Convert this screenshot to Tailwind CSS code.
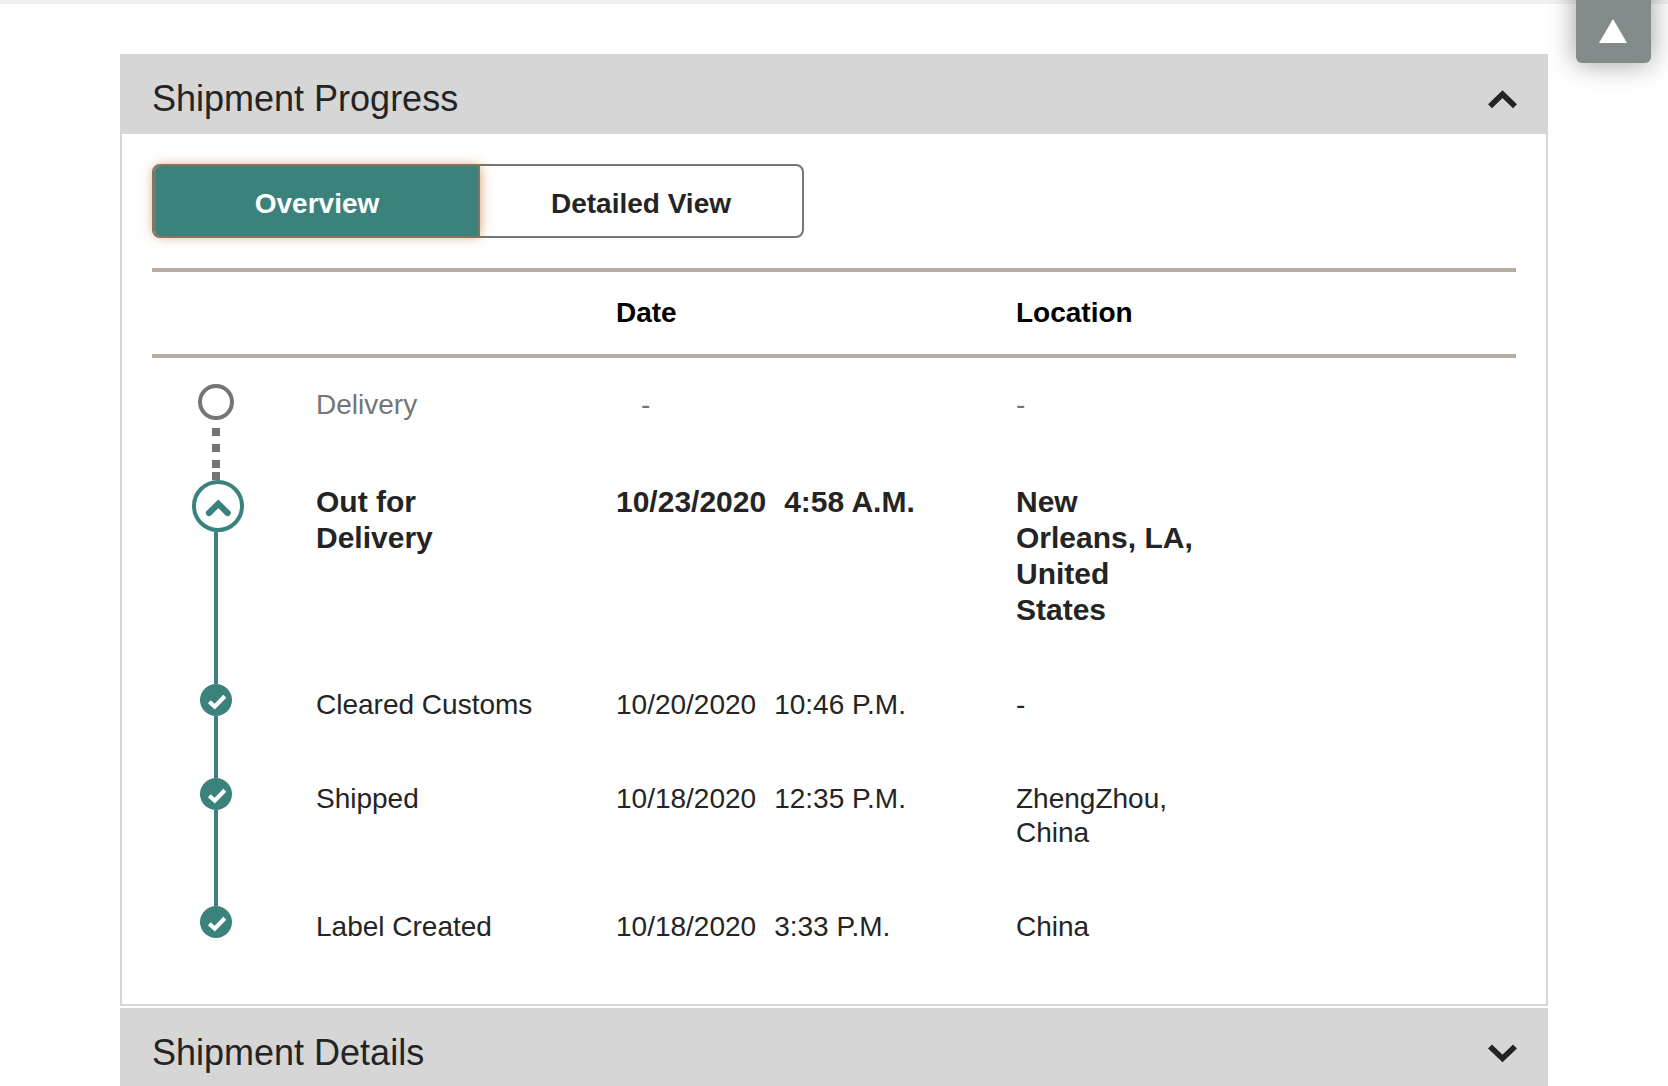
<!DOCTYPE html>
<html lang="en">

<head>
  <meta charset="UTF-8" />
  <meta name="viewport" content="width=device-width, initial-scale=1.0" />
  <title>Shipment Progress</title>
  <script src="https://cdn.jsdelivr.net/npm/@tailwindcss/browser@4"></script>
</head>

<body class="bg-white font-['Liberation_Sans',Arial,sans-serif] text-[28px] leading-[34px] text-[#242424]">

  <div class="h-1 bg-[#f0f0ee]"></div>

  <!-- Back to top -->
  <button type="button" aria-label="Back to top"
    class="fixed -top-5 right-[17px] flex h-[83px] w-[75px] items-end justify-center rounded-md bg-[#828b8a] pb-5 shadow-[0_0_28px_rgba(0,0,0,0.4)]">
    <svg class="h-6 w-[29px]" viewBox="0 0 29 24" fill="#fff">
      <path d="M14 0 28 24H0Z" />
    </svg>
  </button>

  <main class="px-[120px] pt-[50px]">

    <!-- Shipment progress -->
    <section class="border-2 border-t-0 border-[#d6d6d6]">
      <h2 class="-mx-[2px] bg-[#d6d6d6]">
        <button type="button" aria-expanded="true"
          class="flex h-20 w-full items-center justify-between pt-2.5 pr-[31px] pl-8 text-left text-4xl">
          Shipment Progress
          <svg class="h-5 w-[29px]" viewBox="0 0 29 20" fill="none" stroke="currentColor" stroke-width="5.6">
            <path d="M2 17.2 14.5 5.2 27 17.2" />
          </svg>
        </button>
      </h2>

      <div class="px-[30px] pt-[30px]">
        <div class="flex h-[74px] max-w-[652px] rounded-lg border-2 border-[#757575] font-bold">
          <button type="button" aria-pressed="true"
            class="w-[326px] rounded-l-md border-x-2 border-[#757575] bg-[#3a827b] pt-1.5 text-white shadow-[0_0_12px_rgba(190,115,35,0.7)]">Overview</button>
          <button type="button" aria-pressed="false" class="flex-1 pt-1.5">Detailed View</button>
        </div>

        <table class="mt-[30px] block w-full text-left">
          <thead class="block border-y-4 border-[#b9ada2] text-black">
            <tr class="grid grid-cols-[41fr_75fr_100fr_125fr] py-6">
              <td></td>
              <td></td>
              <th>Date</th>
              <th>Location</th>
            </tr>
          </thead>
          <tbody class="block pt-[26px] pb-1">

            <tr class="grid h-24 grid-cols-[41fr_75fr_100fr_125fr] text-[#757575]">
              <td class="flex w-32 flex-col items-center">
                <svg class="size-9" viewBox="0 0 36 36" fill="none" stroke="#757575" stroke-width="4">
                  <circle cx="18" cy="18" r="16" />
                </svg>
                <svg class="h-[60px] w-2" viewBox="0 0 8 60" fill="#757575">
                  <path d="M0 8h8v8H0zM0 24h8v8H0zM0 40h8v8H0zM0 52h8v8H0z" />
                </svg>
              </td>
              <td class="pt-1">Delivery</td>
              <td class="pt-1 pl-[25px]">-</td>
              <td class="pt-1">-</td>
            </tr>

            <tr class="grid grid-cols-[41fr_75fr_100fr_125fr] text-3xl leading-9 font-bold">
              <td class="flex w-32 flex-col items-center">
                <svg class="h-[52px] w-14" viewBox="0 0 56 52" fill="none" stroke="#3a827b">
                  <circle cx="30" cy="26" r="24" stroke-width="4" />
                  <path d="M21 33 30.3 23.8 39.6 33" stroke-width="6.2" stroke-linecap="round" />
                </svg>
                <div class="w-1 flex-1 bg-[#3a827b]"></div>
              </td>
              <td class="max-w-[220px] pt-1 pb-14">Out for Delivery</td>
              <td class="flex gap-[18px] pt-1"><span>10/23/2020</span> <span>4:58 A.M.</span></td>
              <td class="max-w-[184px] pt-1 pb-14">New Orleans, LA, United States</td>
            </tr>

            <tr class="grid grid-cols-[41fr_75fr_100fr_125fr]">
              <td class="flex w-32 flex-col items-center">
                <svg class="size-8" viewBox="0 0 32 32" fill="none">
                  <circle cx="16" cy="16" r="16" fill="#3a827b" />
                  <path d="M9.3 17.8 14.7 22.6 24.8 12.2" stroke="#fff" stroke-width="4.2" />
                </svg>
                <div class="w-1 flex-1 bg-[#3a827b]"></div>
              </td>
              <td class="pt-1 pb-14">Cleared Customs</td>
              <td class="flex gap-[18px] pt-1"><span>10/20/2020</span> <span>10:46 P.M.</span></td>
              <td class="pt-1">-</td>
            </tr>

            <tr class="grid grid-cols-[41fr_75fr_100fr_125fr]">
              <td class="flex w-32 flex-col items-center">
                <svg class="size-8" viewBox="0 0 32 32" fill="none">
                  <circle cx="16" cy="16" r="16" fill="#3a827b" />
                  <path d="M9.3 17.8 14.7 22.6 24.8 12.2" stroke="#fff" stroke-width="4.2" />
                </svg>
                <div class="w-1 flex-1 bg-[#3a827b]"></div>
              </td>
              <td class="pt-1 pb-14">Shipped</td>
              <td class="flex gap-[18px] pt-1"><span>10/18/2020</span> <span>12:35 P.M.</span></td>
              <td class="max-w-[184px] pt-1 pb-14">ZhengZhou, China</td>
            </tr>

            <tr class="grid grid-cols-[41fr_75fr_100fr_125fr]">
              <td class="flex w-32 flex-col items-center">
                <svg class="size-8" viewBox="0 0 32 32" fill="none">
                  <circle cx="16" cy="16" r="16" fill="#3a827b" />
                  <path d="M9.3 17.8 14.7 22.6 24.8 12.2" stroke="#fff" stroke-width="4.2" />
                </svg>
              </td>
              <td class="pt-1 pb-14">Label Created</td>
              <td class="flex gap-[18px] pt-1"><span>10/18/2020</span> <span>3:33 P.M.</span></td>
              <td class="pt-1">China</td>
            </tr>

          </tbody>
        </table>
      </div>
    </section>

    <!-- Shipment details -->
    <section class="mt-[2px]">
      <h2 class="bg-[#d6d6d6]">
        <button type="button" aria-expanded="false"
          class="flex h-20 w-full items-center justify-between pt-2.5 pr-[31px] pl-8 text-left text-4xl">
          Shipment Details
          <svg class="h-5 w-[29px]" viewBox="0 0 29 20" fill="none" stroke="currentColor" stroke-width="5.6">
            <path d="M2 3.4 14.5 15.4 27 3.4" />
          </svg>
        </button>
      </h2>
    </section>

  </main>

</body>

</html>
